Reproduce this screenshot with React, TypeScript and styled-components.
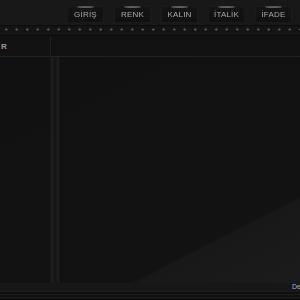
import styled, { createGlobalStyle } from 'styled-components';

const GlobalStyle = createGlobalStyle`
  html, body {
    margin: 0;
    padding: 0;
    background: #121212;
    overflow: hidden;
  }
  #root {
    width: 300px;
    height: 300px;
  }
`;

const Page = styled.div`
  width: 300px;
  height: 300px;
  display: flex;
  flex-direction: column;
  background: #131313;
  font-family: 'Liberation Sans', Arial, sans-serif;
  overflow: hidden;
`;

const Toolbar = styled.div`
  height: 25px;
  display: flex;
  align-items: center;
  justify-content: flex-end;
  gap: 10px;
  padding: 3px 8px 0 0;
  box-sizing: border-box;
  background: #181818;
`;

const ToolButton = styled.div`
  position: relative;
  width: 35px;
  height: 15px;
  display: flex;
  align-items: center;
  justify-content: center;
  background: linear-gradient(#141414, #101010);
  border: 1px solid #1a1a1a;
  color: #a8a8a8;
  font-size: 8px;
  letter-spacing: 0.2px;
  will-change: transform;

  &::before {
    content: '';
    position: absolute;
    top: -1px;
    left: 9px;
    right: 9px;
    height: 2px;
    border-radius: 50%;
    background: #5e5e5e;
    filter: blur(0.6px);
  }
`;

const DotRail = styled.div`
  height: 9px;
  background-color: #141414;
  background-image: radial-gradient(circle, #5a5a5a 0.9px, transparent 1.4px);
  background-size: 10.5px 9px;
  background-position: 1px -1px;
  border-top: 1px solid #0c0c0c;
  border-bottom: 1px solid #0c0c0c;
`;

const TitleRow = styled.div`
  height: 20px;
  display: grid;
  grid-template-columns: 51px 9px 1fr;
  border-bottom: 1px solid #232323;
`;

const TitlePanel = styled.div<{ $edge?: boolean }>`
  display: flex;
  align-items: center;
  padding-left: 1px;
  background: #121212;
  border-right: 1px solid ${(p) => (p.$edge ? '#1e1e1e' : 'transparent')};
  color: #9a9a9a;
  font-size: 8px;
  font-weight: bold;
`;

const Body = styled.div`
  flex: 1;
  display: grid;
  grid-template-columns: 50px 10px 1fr;
  background: linear-gradient(
    153deg,
    #111111 0%,
    #121212 77%,
    #181818 78%,
    #1b1b1b 100%
  );
`;

const Strip = styled.div`
  background: linear-gradient(
    90deg,
    transparent 0px,
    #262626 2px,
    #161616 4px,
    #161616 6px,
    #242424 8px,
    transparent 10px
  );
  opacity: 0.75;
`;

const Footer = styled.div`
  display: flex;
  flex-direction: column;
`;

const Caption = styled.div`
  height: 8px;
  line-height: 8px;
  padding-left: 292px;
  background: #171717;
  color: #b0b0b0;
  font-size: 7px;
  white-space: nowrap;
  overflow: hidden;
`;

const Rails = styled.div`
  height: 9px;
  background: repeating-linear-gradient(
    #1c1c1c 0px,
    #1c1c1c 1px,
    #101010 1px,
    #101010 3px
  );
`;

const buttons = ['GİRİŞ', 'RENK', 'KALIN', 'İTALİK', 'İFADE'];

const App = () => {
  return (
    <Page>
      <GlobalStyle />
      <Toolbar>
        {buttons.map((label) => (
          <ToolButton key={label}>{label}</ToolButton>
        ))}
      </Toolbar>
      <DotRail />
      <TitleRow>
        <TitlePanel $edge>R</TitlePanel>
        <TitlePanel />
        <TitlePanel />
      </TitleRow>
      <Body>
        <div />
        <Strip />
        <div />
      </Body>
      <Footer>
        <Caption>Demo</Caption>
        <Rails />
      </Footer>
    </Page>
  );
};

export default App;
